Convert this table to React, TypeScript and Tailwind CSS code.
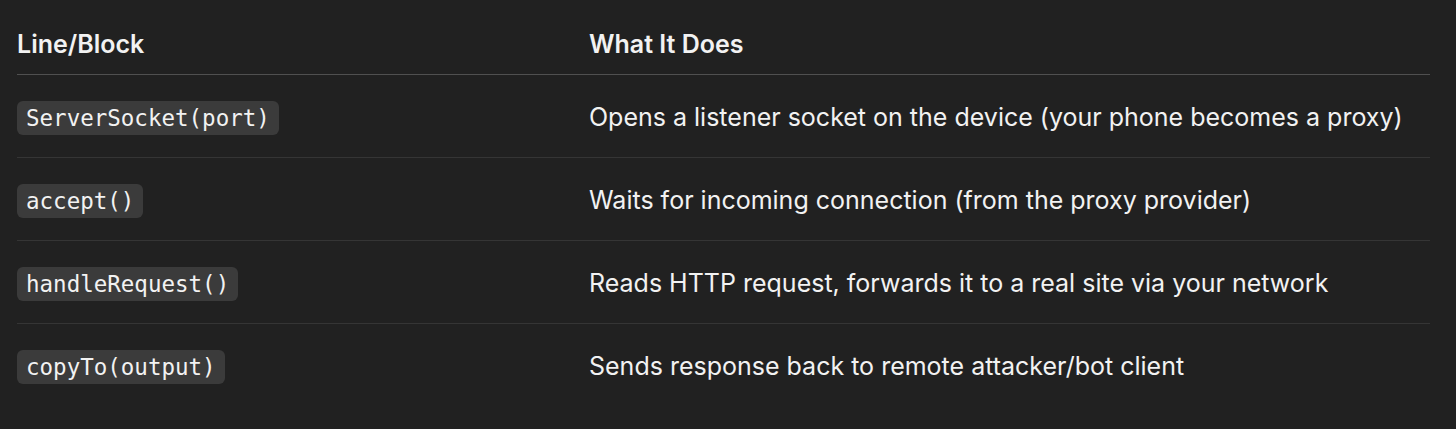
import React from 'react';

const rows = [
  { code: 'ServerSocket(port)', text: 'Opens a listener socket on the device (your phone becomes a proxy)' },
  { code: 'accept()', text: 'Waits for incoming connection (from the proxy provider)' },
  { code: 'handleRequest()', text: 'Reads HTTP request, forwards it to a real site via your network' },
  { code: 'copyTo(output)', text: 'Sends response back to remote attacker/bot client' },
];

const App: React.FC = () => {
  return (
    <div className="min-h-[429px] w-full bg-[#212121] px-[17px] text-[#f2f2f2] font-['Inter',sans-serif]">
      <div className="w-[1413px]">
        <div className="grid grid-cols-[572px_1fr] h-[75px] items-end pb-[11px] border-b border-[#505050] text-[25px] font-semibold">
          <div>Line/Block</div>
          <div>What It Does</div>
        </div>
        {rows.map((r, i) => (
          <div
            key={r.code}
            className={`grid grid-cols-[572px_1fr] h-[83px] pt-[3px] items-center text-[25px] ${i < rows.length - 1 ? 'border-b border-[#353535]' : ''}`}
          >
            <div>
              <span className="inline-block rounded-[6px] bg-[#3b3b3b] px-[9px] py-[3px] font-['DejaVu_Sans_Mono',monospace] text-[22.5px] leading-[28px]">
                {r.code}
              </span>
            </div>
            <div>{r.text}</div>
          </div>
        ))}
      </div>
    </div>
  );
};

export default App;
